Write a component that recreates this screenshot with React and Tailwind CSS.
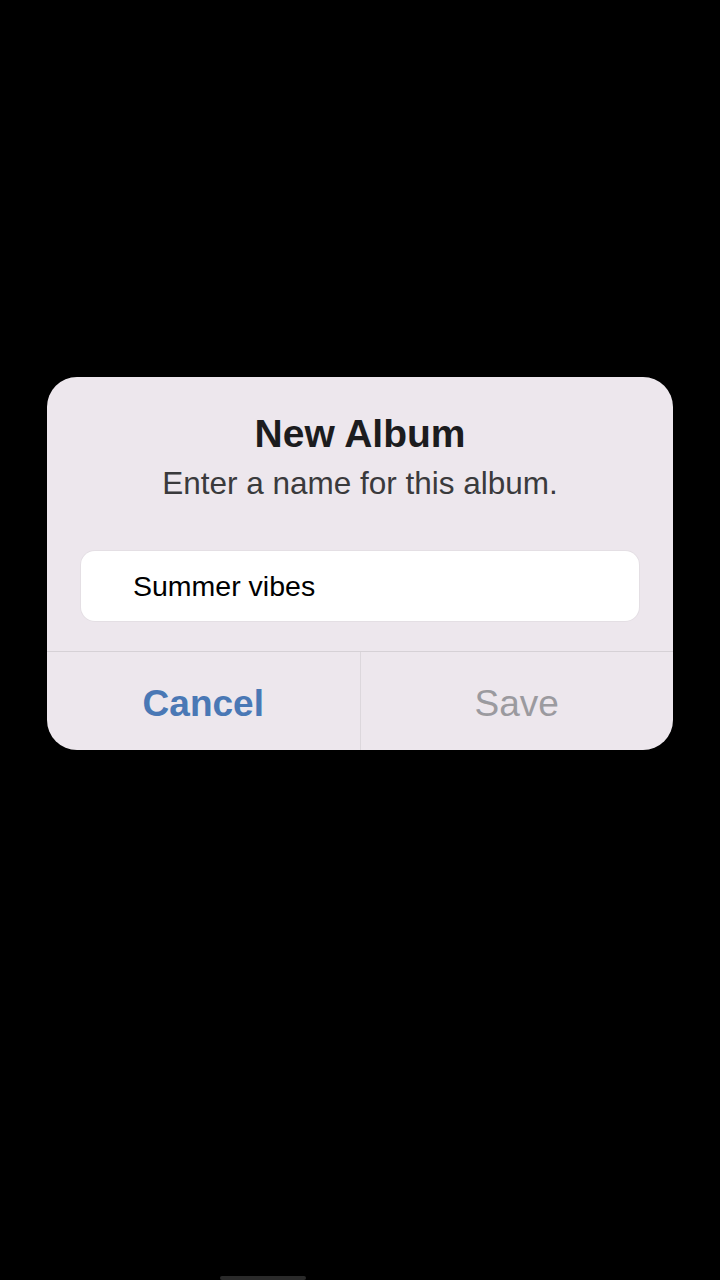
import React from 'react';

const font = { fontFamily: '"Liberation Sans", Arial, sans-serif' };

export default function App() {
  return (
    <div className="relative w-[720px] h-[1280px] bg-black overflow-hidden" style={font}>
      <div className="pt-[377px] flex justify-center">
        <div className="w-[626px] h-[373px] rounded-[30px] bg-[#ede7ed] flex flex-col overflow-hidden">
          <div className="pt-[34px] flex flex-col items-center">
            <h1 className="text-[39px] leading-[46px] font-bold text-[#1c1c1e]">New Album</h1>
            <p className="mt-[7px] text-[31.5px] leading-[38px] text-[#3a3a3c]">Enter a name for this album.</p>
          </div>
          <div className="mt-[49px] mx-[34px] h-[70px] rounded-[14px] bg-white flex items-center pl-[52px] shadow-[0_0_0_1px_#e4dfe4]">
            <span className="text-[28.5px] text-black">Summer vibes</span>
          </div>
          <div className="mt-[30px] border-t border-[#d6d1d6] flex flex-1">
            <div className="flex-1 flex items-center justify-center pt-[6px] border-r border-[#dcd7dc]">
              <span className="text-[37px] font-bold text-[#4a78b5]">Cancel</span>
            </div>
            <div className="flex-1 flex items-center justify-center pt-[6px]">
              <span className="text-[37px] text-[#9b9a9f]">Save</span>
            </div>
          </div>
        </div>
      </div>
      <div className="absolute bottom-0 left-[220px] w-[86px] h-[4px] rounded-full bg-[#2a2a2a]" />
    </div>
  );
}
